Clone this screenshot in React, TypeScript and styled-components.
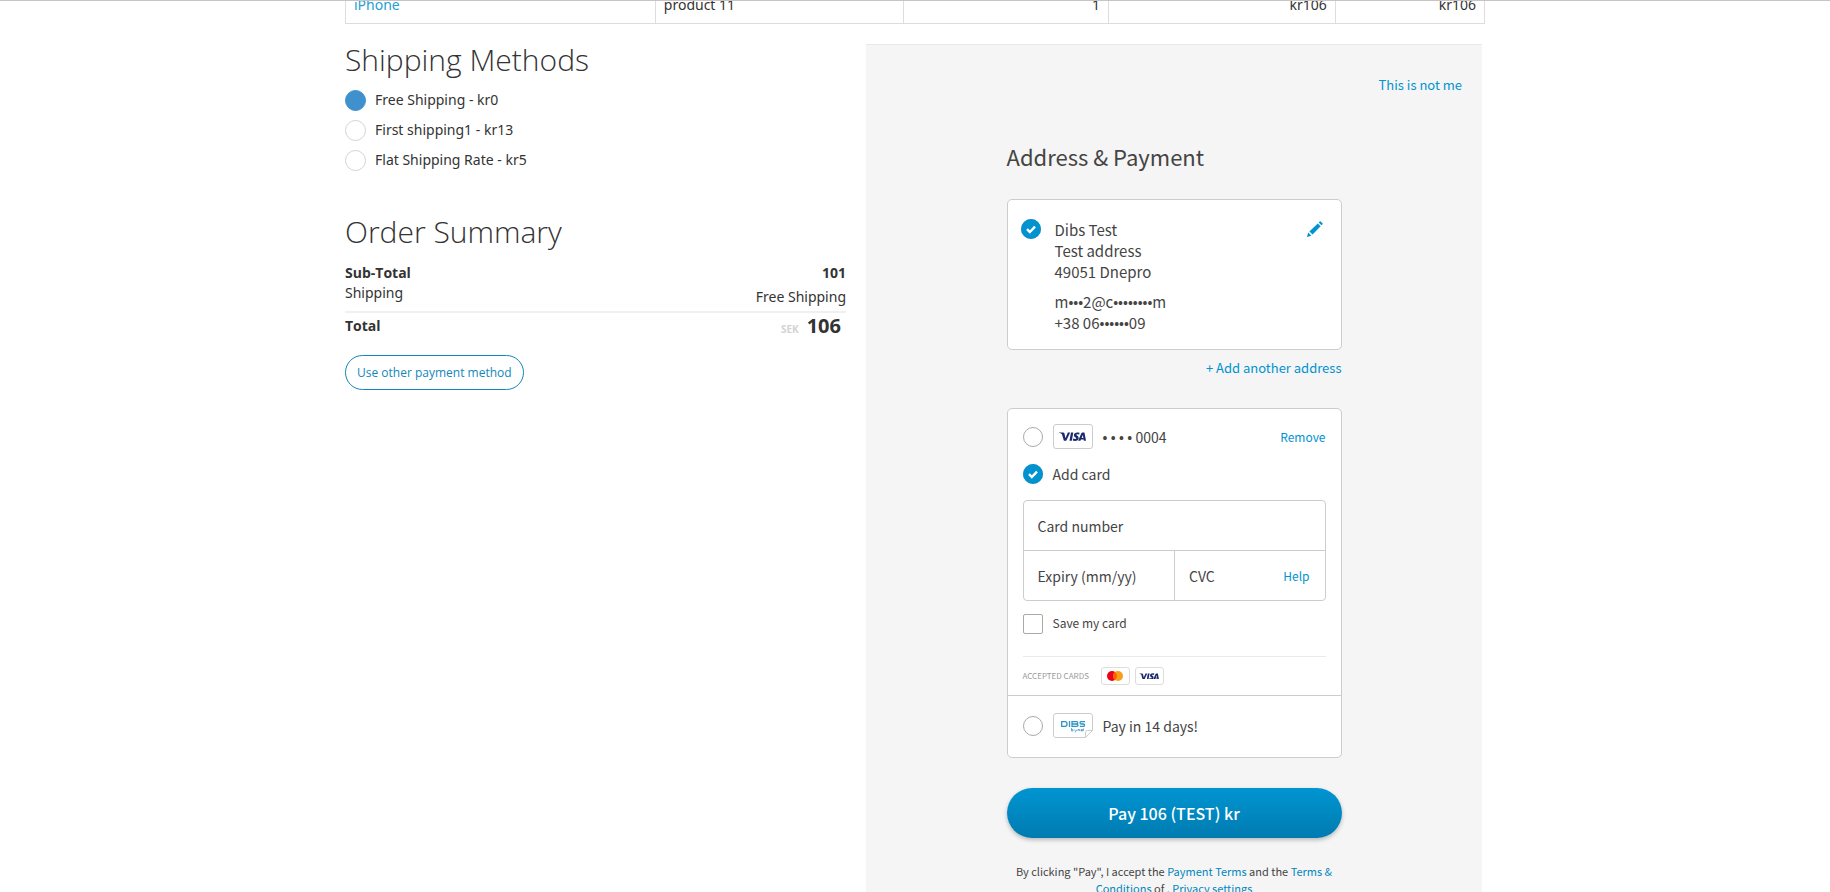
import React from "react";
import styled, { createGlobalStyle } from "styled-components";

const sans = `"Noto Sans CJK SC", "Noto Sans", sans-serif`;
const display = `"Open Sans", "Noto Sans", sans-serif`;
const blue = "#0093d0";

const GlobalStyle = createGlobalStyle`
  *, *::before, *::after { box-sizing: border-box; }
  body {
    margin: 0;
    background: #fff;
    color: #333;
    font: 14px/20px "Noto Sans", "Open Sans", sans-serif;
    overflow: hidden;
  }
  button, input { font: inherit; color: inherit; }
`;

const Page = styled.div`
  height: 100vh;
  overflow: hidden;
  border-top: 1px solid #c9c3c1;
`;

const Container = styled.div`
  max-width: 1140px;
  margin: 0 auto;
`;

const CartViewport = styled.div`
  display: flex;
  align-items: flex-end;
  height: 23px;
  overflow: hidden;
`;

const CartTable = styled.table`
  width: 100%;
  table-layout: fixed;
  border-collapse: collapse;
`;

const Cell = styled.td<{ $align?: string }>`
  padding: 8px;
  border: 1px solid #ddd;
  text-align: ${(p) => p.$align ?? "left"};
`;

const ProductLink = styled.a`
  color: #23a1d1;
  text-decoration: none;
`;

const Columns = styled.main`
  display: grid;
  grid-template-columns: 501fr 616fr;
  column-gap: 20px;
  padding: 20px 3px 0 0;
`;

const Heading = styled.h1<{ $gap: number }>`
  margin: 0 0 ${(p) => p.$gap}px;
  font-family: ${display};
  font-size: 30px;
  line-height: 32px;
  font-weight: 300;
`;

const ShippingList = styled.fieldset`
  display: flex;
  flex-direction: column;
  margin: 0 0 41px;
  padding: 0;
  border: 0;
`;

const ShippingOption = styled.label`
  display: flex;
  align-items: center;
  gap: 9px;
  height: 30px;
`;

const ShippingRadio = styled.input`
  appearance: none;
  width: 21px;
  height: 21px;
  margin: 0;
  border: 1px solid #d3d3d3;
  border-radius: 50%;
  background: #fff;
  &:checked { border-color: #3e91cd; background: #3e91cd; }
`;

const SummaryRow = styled.div<{ $bold?: boolean }>`
  display: flex;
  justify-content: space-between;
  font-family: ${(p) => (p.$bold ? display : "inherit")};
  font-weight: ${(p) => (p.$bold ? 700 : 400)};
`;

const ShippingValue = styled.span`
  padding-top: 4px;
`;

const TotalRow = styled(SummaryRow)`
  margin-top: 4px;
  padding: 3px 5px 0 0;
  border-top: 2px solid #f0f0f0;
`;

const Total = styled.span`
  display: flex;
  align-items: baseline;
  gap: 8px;
  font-size: 20px;
`;

const Currency = styled.span`
  color: #d3d3d3;
  font-size: 10px;
`;

const OtherMethod = styled.button`
  height: 35px;
  margin-top: 16px;
  padding: 0 11px;
  border: 1px solid #1287ba;
  border-radius: 18px;
  background: #fff;
  color: #1287ba;
  font-family: ${display};
  font-size: 12px;
`;

const Panel = styled.section`
  min-height: 900px;
  padding: 30px 20px 0;
  border-top: 1px solid #e8e8e8;
  background: #f5f5f5;
  color: #444;
  font-family: ${sans};
`;

const TextButton = styled.button<{ $size?: number }>`
  padding: 0;
  border: 0;
  background: none;
  color: ${blue};
  font-size: ${(p) => p.$size ?? 12}px;
  line-height: 20px;
`;

const EndRow = styled.div`
  display: flex;
  justify-content: flex-end;
`;

const Checkout = styled.div`
  max-width: 335px;
  margin: 0 auto;
`;

const Title = styled.h2`
  margin: 45px 0 27px;
  font-size: 22px;
  line-height: 32px;
  font-weight: 400;
`;

const Card = styled.div`
  border: 1px solid #ccc;
  border-radius: 5px;
  background: #fff;
`;

const AddressCard = styled(Card)`
  display: flex;
  align-items: flex-start;
  height: 151px;
  padding: 19px 18px 0 13px;
  margin-bottom: 8px;
`;

const Address = styled.address`
  flex: 1;
  margin-left: 14px;
  font-size: 15px;
  line-height: 21px;
  font-style: normal;
`;

const Line = styled.p<{ $gap?: number }>`
  margin: ${(p) => p.$gap ?? 0}px 0 0;
`;

const Dots = styled.span`
  font-family: ${display};
  font-size: 13px;
  font-weight: 700;
  line-height: 1;
`;

const IconButton = styled.button`
  display: flex;
  padding: 0;
  border: 0;
  background: none;
`;

const Radio = styled.input`
  appearance: none;
  flex: none;
  width: 20px;
  height: 20px;
  margin: 0;
  border: 1px solid #aaa;
  border-radius: 50%;
  background: #fff;
`;

const CheckedRadio = styled.span`
  display: grid;
  flex: none;
  width: 20px;
  height: 20px;
  & > * { grid-area: 1 / 1; }
  & > svg { pointer-events: none; }
`;

const PaymentCard = styled(Card)`
  height: 350px;
  margin-top: 30px;
`;

const CardSection = styled.div`
  padding: 15px 15px 0;
`;

const Option = styled.div`
  display: flex;
  align-items: center;
  height: 25px;
  font-size: 14px;
`;

const AddCardOption = styled(Option)`
  margin: 12px 0 14px;
`;

const OptionLabel = styled.label`
  display: flex;
  align-items: center;
  flex: 1;
  gap: 10px;
`;

const Fields = styled.div`
  display: grid;
  grid-template-columns: 1fr 1fr;
  border: 1px solid #ccc;
  border-radius: 4px;
`;

const Field = styled.div<{ $kind: "number" | "expiry" | "cvc" }>`
  display: flex;
  align-items: center;
  grid-column: ${(p) => (p.$kind === "number" ? "1 / 3" : "auto")};
  height: ${(p) => (p.$kind === "number" ? 50 : 49)}px;
  padding: 0 15px 0 14px;
  border-bottom: ${(p) => (p.$kind === "number" ? "1px solid #ccc" : "0")};
  border-left: ${(p) => (p.$kind === "cvc" ? "1px solid #ccc" : "0")};
`;

const FieldInput = styled.input`
  flex: 1;
  width: 100%;
  min-width: 0;
  padding: 0;
  border: 0;
  outline: 0;
  background: none;
  font-size: 14px;
  &::placeholder { color: #444; opacity: 1; }
`;

const SaveRow = styled.label`
  display: flex;
  gap: 10px;
  height: 20px;
  margin: 13px 0 22px;
  font-size: 12px;
  line-height: 17px;
`;

const Checkbox = styled.input`
  appearance: none;
  width: 20px;
  height: 20px;
  margin: 0;
  border: 1px solid #aaa;
  border-radius: 2px;
  background: #fff;
`;

const Accepted = styled.div`
  display: flex;
  align-items: center;
  height: 39px;
  border-top: 1px solid #eaeaea;
  color: #999;
  font-size: 8px;
`;

const AcceptedLabel = styled.span`
  margin-right: 12px;
`;

const Badge = styled.span<{ $small?: boolean }>`
  display: flex;
  align-items: center;
  justify-content: center;
  width: ${(p) => (p.$small ? 29 : 40)}px;
  height: ${(p) => (p.$small ? 18 : 25)}px;
  margin-right: ${(p) => (p.$small ? 5 : 0)}px;
  border: 1px solid ${(p) => (p.$small ? "#ddd" : "#ccc")};
  border-radius: 3px;
`;

const InvoiceSection = styled.div`
  padding: 17px 15px 0;
  border-top: 1px solid #ccc;
`;

const PayButton = styled.button`
  width: 100%;
  height: 50px;
  margin: 30px 0 25px;
  border: 0;
  border-radius: 25px;
  background: linear-gradient(#0095d2, #007bb0);
  box-shadow: 0 2px 4px rgba(0, 0, 0, 0.25);
  color: #fff;
  font-size: 16px;
  font-weight: 500;
`;

const Terms = styled.p`
  margin: 0;
  font-size: 11px;
  line-height: 17px;
  text-align: center;
`;

const TermsLink = styled.a`
  color: #0086bd;
  text-decoration: none;
`;

const CheckMark = () => (
  <svg width="20" height="20" viewBox="0 0 20 20" aria-hidden="true">
    <circle cx="10" cy="10" r="10" fill={blue} />
    <path d="M6 10.2 8.8 13 14 7.6" fill="none" stroke="#fff" strokeWidth="2.4" />
  </svg>
);

const Pencil = () => (
  <svg width="16" height="18" viewBox="0 -2 16 18" fill={blue} aria-hidden="true">
    <path d="M0 16 1.200 11.600 4.400 14.800Z" />
    <path d="M2.400 10.400 10.800 2.400 13.600 5.200 5.600 13.600Z" />
    <path d="M11.700 1.500 12.700 .5Q13.200 0 13.700 .5L15.500 2.300Q16 2.800 15.500 3.300L14.500 4.300Z" />
  </svg>
);

const Visa = ({ width }: { width: number }) => (
  <svg width={width} viewBox="0 0 52 18" fill="#1a2a6c" role="img" aria-label="VISA">
    <path d="M0 1H8Q10 1 10.500 3L12.400 12 17 1H21.500L14 17H9.400L5.700 4.200Q3.500 2.500 0 1.600Z" />
    <path d="M23 1H27.500L24.700 17H20.200Z" />
    <path d="M39.500 1.600 38.800 5.200C36.500 4 33.200 3.900 33.200 5.300 33.200 7 38 7.300 38 11.500 38 15.500 34.500 17.300 31 17.300 29 17.300 27.300 16.900 26.500 16.500L27.200 12.700C29 13.900 33.300 14.300 33.300 12.200 33.300 10.400 28.700 10.300 28.700 6.200 28.700 1.500 34.500-.5 39.500 1.600Z" />
    <path fillRule="evenodd" d="M45.500 1H49L52 17H48L47.500 14.600H42.300L41.300 17H36.900L43 2.500Q43.600 1 45.500 1ZM46 5.800 43.600 11.500H47Z" />
  </svg>
);

const Mastercard = () => (
  <svg width="16" height="10" viewBox="0 0 16 10" role="img" aria-label="Mastercard">
    <circle cx="5" cy="5" r="5" fill="#eb001b" />
    <circle cx="11" cy="5" r="5" fill="#f79e1b" />
    <path d="M8 1A5 5 0 0 1 8 9 5 5 0 0 1 8 1Z" fill="#ff5f00" />
  </svg>
);

const DibsBadge = () => (
  <svg width="40" height="25" viewBox="0 0 40 25" fill="none" role="img" aria-label="DIBS by nets">
    <path d="M32.500 24.500H3Q.5 24.500.5 22V3Q.5.5 3 .5H37Q39.500.5 39.500 3V17.500L32.500 24.500V19.500Q32.500 17.500 34.500 17.500H39.500" stroke="#ccc" />
    <g stroke="#2f93c4" strokeWidth="1.300">
      <path d="M8.700 8.700H12Q14 8.700 14 10.700V11.300Q14 13.300 12 13.300H8.700Z" />
      <path d="M16.500 8V14M19 8.700H23.500Q24.700 8.700 24.700 9.800T23.500 11Q25 11 25 12.200T23.500 13.300H19ZM19 11H23.500" />
      <path d="M32 8.700H28Q27 8.700 27 9.800T28 11H30.500Q31.500 11 31.500 12.200T30.500 13.300H26.800" />
    </g>
    <path d="M18.500 15V18H20V16.500H18.500M21.500 16.500 22.500 18M24 16.500 22 19.500M25 18V16.500H26.500V18M28 17.500H29.500V16.500H28V18H29.500M30.500 15.500V18" stroke="#2f93c4" strokeWidth=".7" />
  </svg>
);

const shipping = ["Free Shipping - kr0", "First shipping1 - kr13", "Flat Shipping Rate - kr5"];

export default function App() {
  return (
    <Page>
      <GlobalStyle />
      <Container>
        <CartViewport>
          <CartTable>
            <colgroup>
              <col style={{ width: "27.2%" }} />
              <col style={{ width: "21.8%" }} />
              <col style={{ width: "18%" }} />
              <col style={{ width: "19.9%" }} />
              <col />
            </colgroup>
            <tbody>
              <tr>
                <Cell><ProductLink href="#iphone">iPhone</ProductLink></Cell>
                <Cell>product 11</Cell>
                <Cell $align="right">1</Cell>
                <Cell $align="right">kr106</Cell>
                <Cell $align="right">kr106</Cell>
              </tr>
            </tbody>
          </CartTable>
        </CartViewport>
        <Columns>
          <div>
            <Heading $gap={9}>Shipping Methods</Heading>
            <ShippingList>
              {shipping.map((name, i) => (
                <ShippingOption key={name}>
                  <ShippingRadio type="radio" name="shipping" defaultChecked={i === 0} />
                  {name}
                </ShippingOption>
              ))}
            </ShippingList>
            <Heading as="h2" $gap={15}>Order Summary</Heading>
            <SummaryRow $bold><span>Sub-Total</span><span>101</span></SummaryRow>
            <SummaryRow><span>Shipping</span><ShippingValue>Free Shipping</ShippingValue></SummaryRow>
            <TotalRow $bold>
              <span>Total</span>
              <Total><Currency>SEK</Currency>106</Total>
            </TotalRow>
            <OtherMethod type="button">Use other payment method</OtherMethod>
          </div>
          <Panel>
            <EndRow><TextButton type="button" $size={13}>This is not me</TextButton></EndRow>
            <Checkout>
              <Title>Address &amp; Payment</Title>
              <AddressCard>
                <CheckedRadio>
                  <Radio type="radio" name="address" aria-label="Dibs Test" defaultChecked />
                  <CheckMark />
                </CheckedRadio>
                <Address>
                  <Line>Dibs Test</Line>
                  <Line>Test address</Line>
                  <Line>49051 Dnepro</Line>
                  <Line $gap={9}>m<Dots>•••</Dots>2@c<Dots>••••••••</Dots>m</Line>
                  <Line>+38 06<Dots>••••••</Dots>09</Line>
                </Address>
                <IconButton type="button" aria-label="Edit address"><Pencil /></IconButton>
              </AddressCard>
              <EndRow><TextButton type="button" $size={13}>+ Add another address</TextButton></EndRow>
              <PaymentCard>
                <CardSection>
                  <Option>
                    <OptionLabel>
                      <Radio type="radio" name="payment" />
                      <Badge><Visa width={27} /></Badge>
                      <span><Dots>• • • • </Dots>0004</span>
                    </OptionLabel>
                    <TextButton type="button">Remove</TextButton>
                  </Option>
                  <AddCardOption>
                    <OptionLabel>
                      <CheckedRadio>
                        <Radio type="radio" name="payment" defaultChecked />
                        <CheckMark />
                      </CheckedRadio>
                      Add card
                    </OptionLabel>
                  </AddCardOption>
                  <Fields>
                    <Field $kind="number"><FieldInput aria-label="Card number" placeholder="Card number" /></Field>
                    <Field $kind="expiry"><FieldInput aria-label="Expiry" placeholder="Expiry (mm/yy)" /></Field>
                    <Field $kind="cvc">
                      <FieldInput aria-label="CVC" placeholder="CVC" />
                      <TextButton type="button">Help</TextButton>
                    </Field>
                  </Fields>
                  <SaveRow><Checkbox type="checkbox" />Save my card</SaveRow>
                  <Accepted>
                    <AcceptedLabel>ACCEPTED CARDS</AcceptedLabel>
                    <Badge $small><Mastercard /></Badge>
                    <Badge $small><Visa width={20} /></Badge>
                  </Accepted>
                </CardSection>
                <InvoiceSection>
                  <Option>
                    <OptionLabel>
                      <Radio type="radio" name="payment" />
                      <DibsBadge />
                      Pay in 14 days!
                    </OptionLabel>
                  </Option>
                </InvoiceSection>
              </PaymentCard>
              <PayButton type="button">Pay 106 (TEST) kr</PayButton>
              <Terms>
                By clicking "Pay", I accept the <TermsLink href="#payment">Payment Terms</TermsLink> and the{" "}
                <TermsLink href="#terms">Terms &amp; Conditions</TermsLink> of . <TermsLink href="#privacy">Privacy settings</TermsLink>
              </Terms>
            </Checkout>
          </Panel>
        </Columns>
      </Container>
    </Page>
  );
}
